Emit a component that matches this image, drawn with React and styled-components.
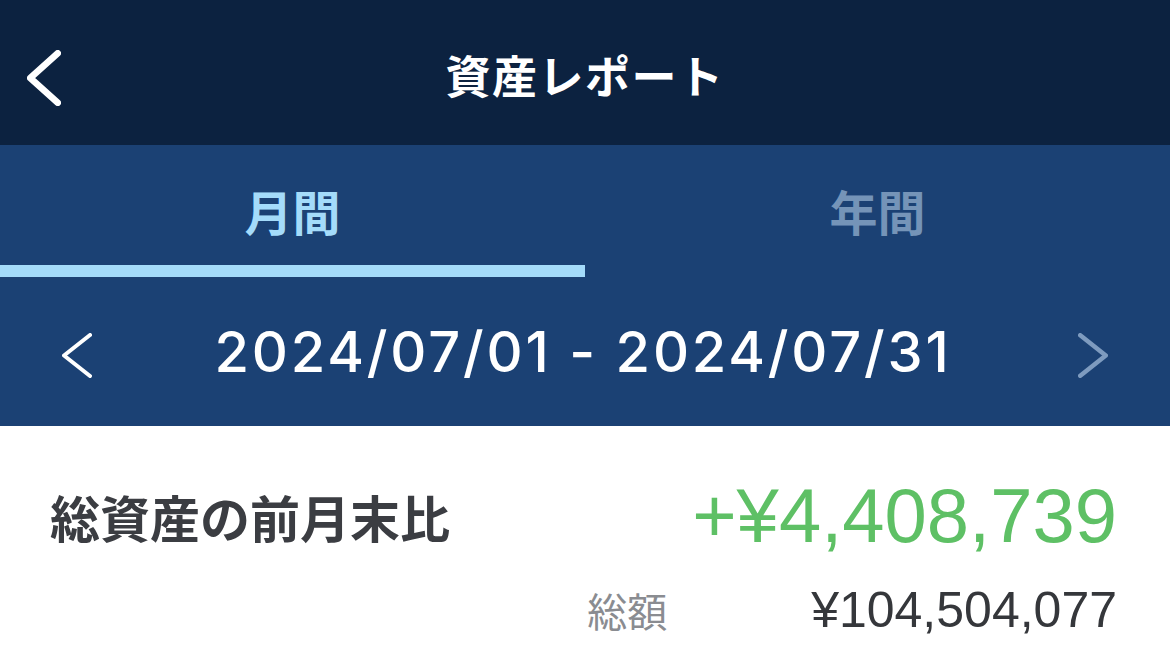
import React from "react";
import styled, { createGlobalStyle } from "styled-components";

const Global = createGlobalStyle`
  html, body { margin: 0; padding: 0; background: #ffffff; }
  body { font-family: "Liberation Sans", "Noto Sans CJK JP", sans-serif; }
  * { box-sizing: border-box; }
`;

const CJK = `"Noto Sans CJK JP", "Noto Sans", sans-serif`;
const NUM = `"Liberation Sans", "Noto Sans CJK JP", sans-serif`;

const Page = styled.div`
  width: 1170px;
  min-height: 672px;
  background: #ffffff;
`;

const Header = styled.header`
  height: 145px;
  background: #0c2240;
  display: grid;
  grid-template-columns: 1fr auto 1fr;
  align-items: center;
`;

const BackButton = styled.div`
  padding-left: 27px;
  padding-top: 11px;
  display: flex;
  align-items: center;
`;

const Title = styled.h1`
  margin: 0;
  padding-top: 4px;
  font-family: ${CJK};
  font-weight: 700;
  font-size: 45px;
  color: #ffffff;
  letter-spacing: 1.5px;
  line-height: 1;
`;

const Tabs = styled.nav`
  display: flex;
  background: #1b4174;
`;

const Tab = styled.div`
  flex: 1;
  height: 132px;
  padding-top: 9px;
  display: flex;
  align-items: center;
  justify-content: center;
  font-family: ${CJK};
  font-weight: 700;
  font-size: 48px;
  color: ${(p) => (p.$active ? "#a4dbfa" : "#7594b8")};
  border-bottom: 12px solid ${(p) => (p.$active ? "#a4dbfa" : "transparent")};
`;

const DateRow = styled.div`
  height: 149px;
  background: #1b4174;
  display: flex;
  align-items: center;
  justify-content: space-between;
  padding: 0 62px 0 62px;
`;

const NavIcon = styled.div`
  display: flex;
  margin-top: 8px;
`;

const DateText = styled.div`
  font-family: "Inter", ${NUM};
  font-weight: 500;
  font-size: 56px;
  letter-spacing: 2.8px;
  color: #ffffff;
  line-height: 1;
  margin-left: -4px;
`;

const Summary = styled.section`
  padding: 52px 53px 0 50px;
`;

const DiffRow = styled.div`
  display: flex;
  align-items: center;
  justify-content: space-between;
  height: 76px;
`;

const DiffLabel = styled.div`
  font-family: ${CJK};
  font-weight: 700;
  font-size: 50px;
  color: #3b3d42;
  line-height: 1;
`;

const DiffValue = styled.div`
  font-family: ${NUM};
  font-size: 76px;
  color: #5ec065;
  line-height: 1;
`;

const TotalRow = styled.div`
  margin-top: 30px;
  height: 52px;
  display: flex;
  align-items: center;
  justify-content: flex-end;
  gap: 144px;
`;

const TotalLabel = styled.div`
  font-family: ${CJK};
  font-size: 40px;
  color: #8a8c91;
  line-height: 1;
`;

const TotalValue = styled.div`
  font-family: ${NUM};
  font-size: 50px;
  color: #35373b;
  line-height: 1;
`;

const Chevron = ({ dir = "left", color = "#fff", w = 30, h = 46, sw = 4 }) => {
  const pts =
    dir === "left"
      ? `${w - sw / 2},${sw / 2} ${sw / 2},${h / 2} ${w - sw / 2},${h - sw / 2}`
      : `${sw / 2},${sw / 2} ${w - sw / 2},${h / 2} ${sw / 2},${h - sw / 2}`;
  return (
    <svg width={w} height={h} viewBox={`0 0 ${w} ${h}`}>
      <polyline
        points={pts}
        fill="none"
        stroke={color}
        strokeWidth={sw}
        strokeLinecap="round"
        strokeLinejoin="round"
      />
    </svg>
  );
};

export default function App() {
  return (
    <Page>
      <Global />
      <Header>
        <BackButton>
          <Chevron dir="left" w={34} h={56} sw={6.5} />
        </BackButton>
        <Title>資産レポート</Title>
        <div />
      </Header>
      <Tabs>
        <Tab $active>月間</Tab>
        <Tab>年間</Tab>
      </Tabs>
      <DateRow>
        <NavIcon>
          <Chevron dir="left" w={30} h={45} sw={4} />
        </NavIcon>
        <DateText>2024/07/01 - 2024/07/31</DateText>
        <NavIcon>
          <Chevron dir="right" color="#7e9bbf" w={30} h={45} sw={4.5} />
        </NavIcon>
      </DateRow>
      <Summary>
        <DiffRow>
          <DiffLabel>総資産の前月末比</DiffLabel>
          <DiffValue>+¥4,408,739</DiffValue>
        </DiffRow>
        <TotalRow>
          <TotalLabel>総額</TotalLabel>
          <TotalValue>¥104,504,077</TotalValue>
        </TotalRow>
      </Summary>
    </Page>
  );
}
